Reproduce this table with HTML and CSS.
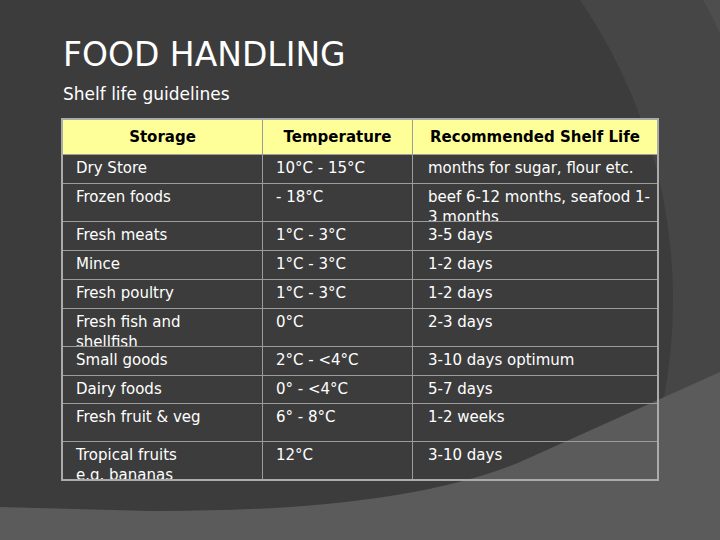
FILE: index.html
```html
<!DOCTYPE html>
<html>
<head>
<meta charset="utf-8">
<link rel="stylesheet" href="styles.css">
</head>
<body>
<div class="slide">
  <h1 class="title">FOOD HANDLING</h1>
  <p class="subtitle">Shelf life guidelines</p>
  <div class="table">
    <div class="cell head">Storage</div>
    <div class="cell head">Temperature</div>
    <div class="cell head last">Recommended Shelf Life</div>

    <div class="cell">Dry Store</div>
    <div class="cell">10°C - 15°C</div>
    <div class="cell last">months for sugar, flour etc.</div>

    <div class="cell">Frozen foods</div>
    <div class="cell">- 18°C</div>
    <div class="cell last">beef 6-12 months, seafood 1-<br>3 months</div>

    <div class="cell">Fresh meats</div>
    <div class="cell">1°C - 3°C</div>
    <div class="cell last">3-5 days</div>

    <div class="cell">Mince</div>
    <div class="cell">1°C - 3°C</div>
    <div class="cell last">1-2 days</div>

    <div class="cell">Fresh poultry</div>
    <div class="cell">1°C - 3°C</div>
    <div class="cell last">1-2 days</div>

    <div class="cell">Fresh fish and<br>shellfish</div>
    <div class="cell">0°C</div>
    <div class="cell last">2-3 days</div>

    <div class="cell">Small goods</div>
    <div class="cell">2°C - &lt;4°C</div>
    <div class="cell last">3-10 days optimum</div>

    <div class="cell">Dairy foods</div>
    <div class="cell">0° - &lt;4°C</div>
    <div class="cell last">5-7 days</div>

    <div class="cell">Fresh fruit &amp; veg</div>
    <div class="cell">6° - 8°C</div>
    <div class="cell last">1-2 weeks</div>

    <div class="cell bottom">Tropical fruits<br>e.g. bananas</div>
    <div class="cell bottom">12°C</div>
    <div class="cell bottom last">3-10 days</div>
  </div>
</div>
</body>
</html>
```
FILE: styles.css
```css
html, body {
  margin: 0;
  padding: 0;
}
body {
  width: 720px;
  height: 540px;
  overflow: hidden;
  font-family: "DejaVu Sans", "Liberation Sans", sans-serif;
  color: #ffffff;
  background-color: #464646;
  background-image: url("data:image/svg+xml;utf8,<svg xmlns='http://www.w3.org/2000/svg' width='720' height='540' viewBox='0 0 720 540'><rect width='720' height='540' fill='%23464646'/><circle cx='143' cy='300' r='530' fill='%233c3c3c'/><path d='M703 0 Q712 15 720 34 V0 Z' fill='%234e4e4e'/><path d='M720 372 L520 462 Q400 512 150 511 L0 507 V540 H720 Z' fill='%235b5b5b'/></svg>");
  background-repeat: no-repeat;
}
.slide {
  padding: 36px 0 0 61px;
}
.title {
  margin: 0 0 0 2px;
  font-size: 33px;
  font-weight: normal;
  line-height: 38px;
}
.subtitle {
  margin: 9px 0 0 2px;
  font-size: 17px;
  line-height: 22px;
}
.table {
  margin-top: 13px;
  display: grid;
  grid-template-columns: 200px 150px 244px;
  grid-template-rows: 35px 29px 38px 29px 29px 29px 38px 29px 28px 38px 37px;
  width: 594px;
  border: 2px solid #ababab;
}
.cell {
  box-sizing: border-box;
  border-right: 1px solid #9c9c9c;
  border-bottom: 1px solid #9c9c9c;
  padding: 3px 0 0 13px;
  font-size: 15px;
  line-height: 20px;
  white-space: nowrap;
  overflow: hidden;
}
.cell.last {
  border-right: none;
  padding-left: 15px;
}
.cell.bottom {
  border-bottom: none;
}
.head {
  background: #ffff99;
  color: #000000;
  font-weight: bold;
  text-align: center;
  padding: 7px 0 0 0;
}
.head.last {
  padding-left: 0;
}
```
